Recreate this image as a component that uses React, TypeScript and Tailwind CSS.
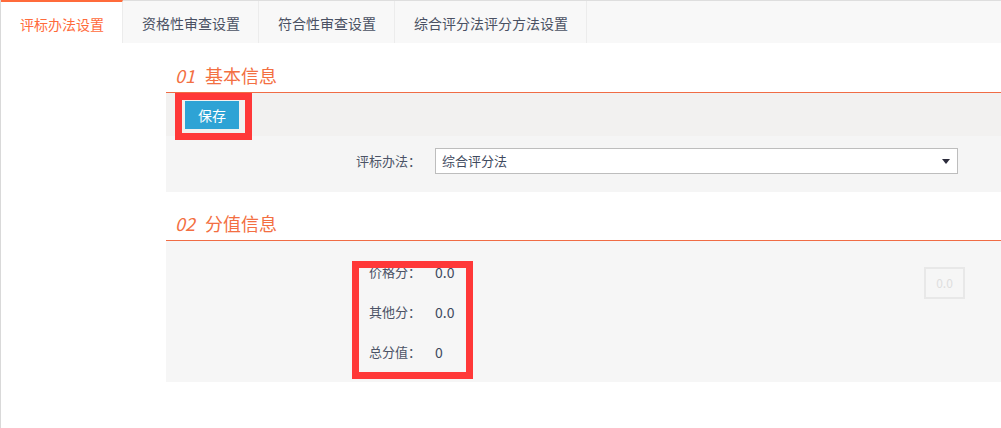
const tabs = ["评标办法设置", "资格性审查设置", "符合性审查设置", "综合评分法评分方法设置"]

const scores = [
  { label: "价格分：", value: "0.0" },
  { label: "其他分：", value: "0.0" },
  { label: "总分值：", value: "0" },
]

function SectionTitle({ no, title }: { no: string; title: string }) {
  return (
    <div className="h-[49px] flex items-end pb-[5px] pl-[9px] border-b border-[#f06c45] text-[18px] leading-[24px] text-[#f36f42]">
      <span className="italic mr-[10px]">{no}</span>
      <span>{title}</span>
    </div>
  )
}

export default function App() {
  return (
    <div
      className="relative w-[1001px] h-[428px] bg-white border-l border-[#d9d9d9] overflow-hidden"
      style={{ fontFamily: '"Noto Sans CJK SC", "Noto Sans", sans-serif' }}
    >
      {/* 标签页 */}
      <div className="flex h-[43px] bg-[#f8f8f8] border-t border-[#dedede]">
        {tabs.map((t, i) => (
          <div
            key={t}
            className={
              i === 0
                ? "-mt-px h-[43px] pl-[19px] pr-[18px] flex items-center pt-[3px] bg-white border-t-2 border-[#ff6b3b] border-r border-r-[#ececec] text-[14px] text-[#ff6b3b]"
                : "h-[42px] pl-[19px] pr-[18px] flex items-center pt-[2px] border-r border-[#ececec] text-[14px] text-[#4a5163]"
            }
          >
            {t}
          </div>
        ))}
      </div>

      <div className="pl-[165px] pt-px">
        {/* 01 基本信息 */}
        <SectionTitle no="01" title="基本信息" />
        <div className="h-[43px] bg-[#f2f1f0] flex items-center pl-[19px]">
          <button className="h-[28px] w-[54px] bg-[#2ea3d5] text-white text-[14px] leading-[28px]">保存</button>
        </div>
        <div className="h-[56px] bg-[#f5f5f5] flex items-start pt-[12px]">
          <div className="w-[255px] text-right text-[13px] leading-[26px] text-[#4b5366]">评标办法：</div>
          <div className="ml-[14px] w-[523px] h-[26px] bg-white border border-[#bdbdbd] flex items-center justify-between pl-[6px] pr-[7px] text-[13px] text-[#3f4a5e]">
            <span>综合评分法</span>
            <svg width="8" height="5" viewBox="0 0 8 5">
              <path d="M0 0 L8 0 L4 5 Z" fill="#2c2c3c" />
            </svg>
          </div>
        </div>

        {/* 02 分值信息 */}
        <SectionTitle no="02" title="分值信息" />
        <div className="h-[141px] bg-[#f6f6f6] flex pt-[11px]">
          <div className="flex flex-col">
            {scores.map((s) => (
              <div key={s.label} className="h-[40px] flex items-center">
                <div className="w-[255px] text-right text-[13px] text-[#4b5366]">{s.label}</div>
                <div className="ml-[14px] text-[14px] text-[#3f4a5e]">{s.value}</div>
              </div>
            ))}
          </div>
          <div className="ml-auto mr-[36px] mt-[15px] w-[41px] h-[32px] border-2 border-[#e8e8e8] flex items-center justify-center text-[12px] text-[#dedede]">
            0.0
          </div>
        </div>
      </div>

      {/* 标注框 */}
      <div className="absolute left-[174px] top-[93px] w-[77px] h-[47px] border-[7px] border-[#ff3838] pointer-events-none" />
      <div className="absolute left-[351px] top-[261px] w-[121px] h-[118px] border-[7px] border-[#ff3838] pointer-events-none" />
    </div>
  )
}
